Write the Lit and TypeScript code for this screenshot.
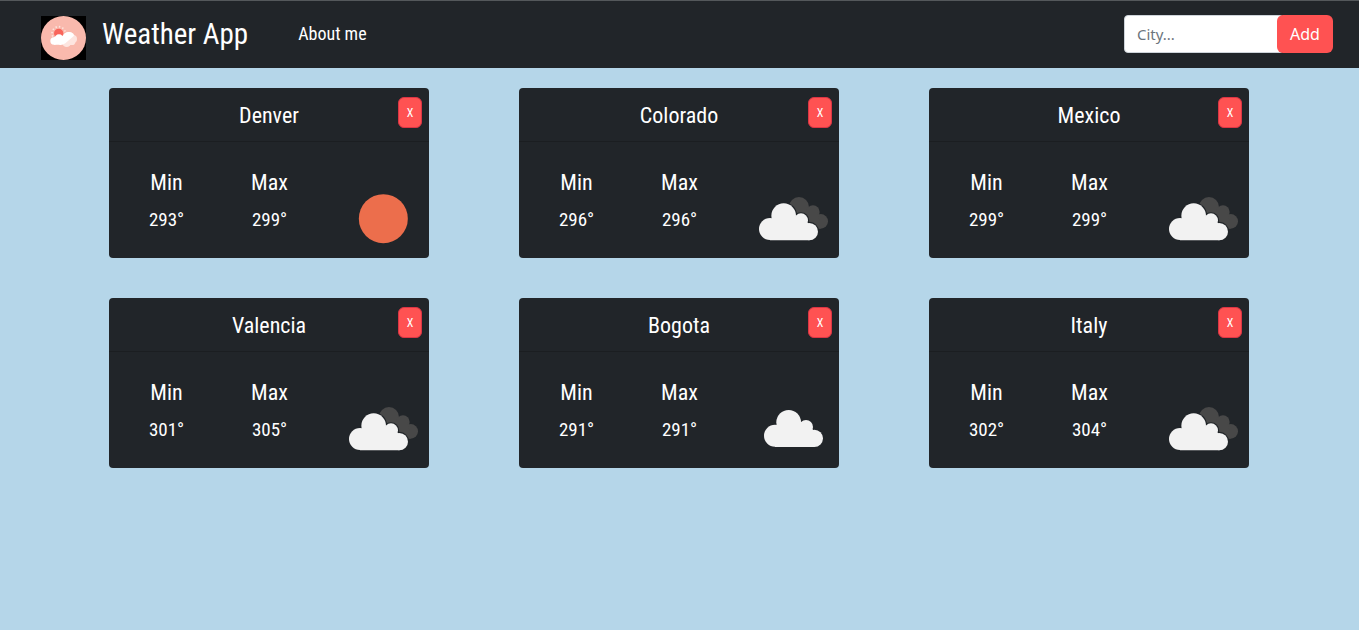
import { LitElement, html, css, svg } from "lit";
import { customElement, property, state } from "lit/decorators.js";

type Sky = "clear" | "cloudy" | "broken";

interface City {
  name: string;
  min: number;
  max: number;
  sky: Sky;
}

const cloud = svg`
  <circle cx="33" cy="77" r="33" />
  <circle cx="74" cy="37" r="37" />
  <circle cx="126" cy="51" r="21" />
  <circle cx="151" cy="85" r="26" />
  <path d="M33 50 L60 40 H120 L151 62 V111 H33 Z" />`;

@customElement("weather-icon")
export class WeatherIcon extends LitElement {
  @property() sky: Sky = "clear";

  static styles = css`
    :host {
      display: block;
    }
    .icon {
      display: block;
      width: 70px;
      height: 50px;
    }
    .sun {
      fill: #ec6e4c;
    }
    .front {
      fill: #f2f2f2;
    }
    .back {
      fill: #484848;
    }
    .gap {
      fill: #212529;
      stroke: #212529;
      stroke-width: 7;
    }
  `;

  render() {
    const drawing = {
      clear: svg`<circle class="sun" cx="103" cy="74" r="73.5" />`,
      cloudy: svg`<g class="front" transform="translate(15 18)">${cloud}</g>`,
      broken: svg`
        <g class="back">
          <circle cx="120" cy="39" r="30" />
          <circle cx="162" cy="54" r="20" />
          <circle cx="185" cy="82" r="22" />
          <path d="M120 50 H175 L185 104 H140 Z" />
        </g>
        <g class="gap" transform="translate(0 28)">${cloud}</g>
        <g class="front" transform="translate(0 28)">${cloud}</g>`,
    }[this.sky];
    return html`<svg class="icon" viewBox="0 0 210 150" aria-hidden="true">${drawing}</svg>`;
  }
}

@customElement("city-card")
export class CityCard extends LitElement {
  @property({ attribute: false }) city!: City;

  static styles = css`
    :host {
      display: block;
      position: relative;
      background: #212529;
      color: #fff;
      border-radius: 4px;
    }
    .name {
      margin: 0;
      padding: 13px 0 11px;
      border-bottom: 1px solid #1b1e21;
      font-size: 22px;
      font-weight: 400;
      line-height: 29px;
      text-align: center;
    }
    .close {
      position: absolute;
      top: 9px;
      right: 7px;
      width: 24px;
      height: 31px;
      padding: 0;
      border: 1px solid #dc3545;
      border-radius: 6px;
      background: #ff5252;
      color: #fff;
      font: inherit;
      font-size: 12px;
      cursor: pointer;
    }
    .body {
      display: grid;
      grid-template-columns: 1fr 1fr auto;
      padding: 26px 10px 14px 6px;
      text-align: center;
    }
    .reading {
      padding-bottom: 9px;
    }
    .label {
      margin: 0 0 8px;
      font-size: 22px;
      font-weight: 400;
      line-height: 29px;
    }
    .value {
      margin: 0;
      font-size: 19px;
      line-height: 30px;
    }
    .sky {
      align-self: end;
      padding-left: 28px;
    }
  `;

  private close() {
    this.dispatchEvent(new CustomEvent("close-city", { detail: this.city.name }));
  }

  render() {
    const { name, min, max, sky } = this.city;
    return html`
      <h2 class="name">${name}</h2>
      <button class="close" type="button" @click=${this.close}>X</button>
      <div class="body">
        <div class="reading">
          <h3 class="label">Min</h3>
          <p class="value">${min}°</p>
        </div>
        <div class="reading">
          <h3 class="label">Max</h3>
          <p class="value">${max}°</p>
        </div>
        <weather-icon class="sky" .sky=${sky}></weather-icon>
      </div>
    `;
  }
}

@customElement("app-root")
export class AppRoot extends LitElement {
  @state() private cities: City[] = [
    { name: "Denver", min: 293, max: 299, sky: "clear" },
    { name: "Colorado", min: 296, max: 296, sky: "broken" },
    { name: "Mexico", min: 299, max: 299, sky: "broken" },
    { name: "Valencia", min: 301, max: 305, sky: "broken" },
    { name: "Bogota", min: 291, max: 291, sky: "cloudy" },
    { name: "Italy", min: 302, max: 304, sky: "broken" },
  ];

  static styles = css`
    :host {
      display: block;
      min-height: 100vh;
      background: #b5d6e9;
      font-family: "Roboto Condensed", "Liberation Sans Narrow", "Arial Narrow", "Liberation Sans", sans-serif;
    }
    .bar {
      display: flex;
      align-items: center;
      box-sizing: border-box;
      padding: 14px 26px 15px 41px;
      border-top: 1px solid #54585b;
      background: #212529;
    }
    .brand {
      display: flex;
      align-items: center;
      gap: 16px;
      color: #fff;
      font-size: 29px;
      line-height: 38px;
      text-decoration: none;
    }
    .logo {
      display: block;
      width: 45px;
      height: 44px;
      margin-bottom: -8px;
    }
    .about {
      margin-left: 50px;
      color: #fff;
      font-size: 18px;
      line-height: 30px;
      text-decoration: none;
    }
    .search {
      display: flex;
      margin-left: auto;
      font-family: "Noto Sans", "Open Sans", sans-serif;
    }
    .field {
      box-sizing: border-box;
      width: 160px;
      height: 38px;
      margin-right: -7px;
      padding: 0 12px;
      border: 1px solid #ced4da;
      border-radius: 4px;
      background: #fff;
      color: #212529;
      font: inherit;
      font-size: 15px;
    }
    .field::placeholder {
      color: #6c757d;
      opacity: 1;
    }
    .add {
      position: relative;
      width: 56px;
      height: 38px;
      padding: 0;
      border: 0;
      border-radius: 6px;
      background: #ff5252;
      color: #fff;
      font: inherit;
      font-size: 16px;
      cursor: pointer;
    }
    .cards {
      display: grid;
      grid-template-columns: repeat(auto-fit, 320px);
      justify-content: center;
      gap: 40px 90px;
      padding: 20px 17px 20px 16px;
    }
  `;

  private remove(event: CustomEvent<string>) {
    this.cities = this.cities.filter((city) => city.name !== event.detail);
  }

  render() {
    return html`
      <nav class="bar">
        <a class="brand" href="#">
          <svg class="logo" viewBox="0 0 135 132" aria-hidden="true">
            <rect width="135" height="132" fill="#000" />
            <ellipse cx="67.5" cy="66" rx="67.5" ry="66" fill="#f9b9ad" />
            <circle cx="53" cy="52" r="20" fill="none" stroke="#fde5df" stroke-width="5" stroke-dasharray="4 6.5" />
            <circle cx="53" cy="52" r="14" fill="#f9655b" />
            <g fill="#fde5e0">
              <circle cx="84" cy="67" r="19" />
              <circle cx="96" cy="69" r="12" />
              <circle cx="77" cy="80" r="13" />
              <rect x="68" y="63" width="35" height="24" rx="10" />
            </g>
            <g fill="#fff">
              <circle cx="39" cy="75" r="11" />
              <circle cx="54" cy="69" r="14" />
              <path d="M39 64 L65 60 Q72 47 84 48 Q96 48 99 59 L73 82 Q62 90 54 86 H39 Z" />
            </g>
          </svg>
          Weather App
        </a>
        <a class="about" href="#about">About me</a>
        <form class="search" @submit=${(event: Event) => event.preventDefault()}>
          <input class="field" type="text" placeholder="City..." aria-label="City" />
          <button class="add" type="submit">Add</button>
        </form>
      </nav>
      <main class="cards">
        ${this.cities.map((city) => html`<city-card .city=${city} @close-city=${this.remove}></city-card>`)}
      </main>
    `;
  }
}
